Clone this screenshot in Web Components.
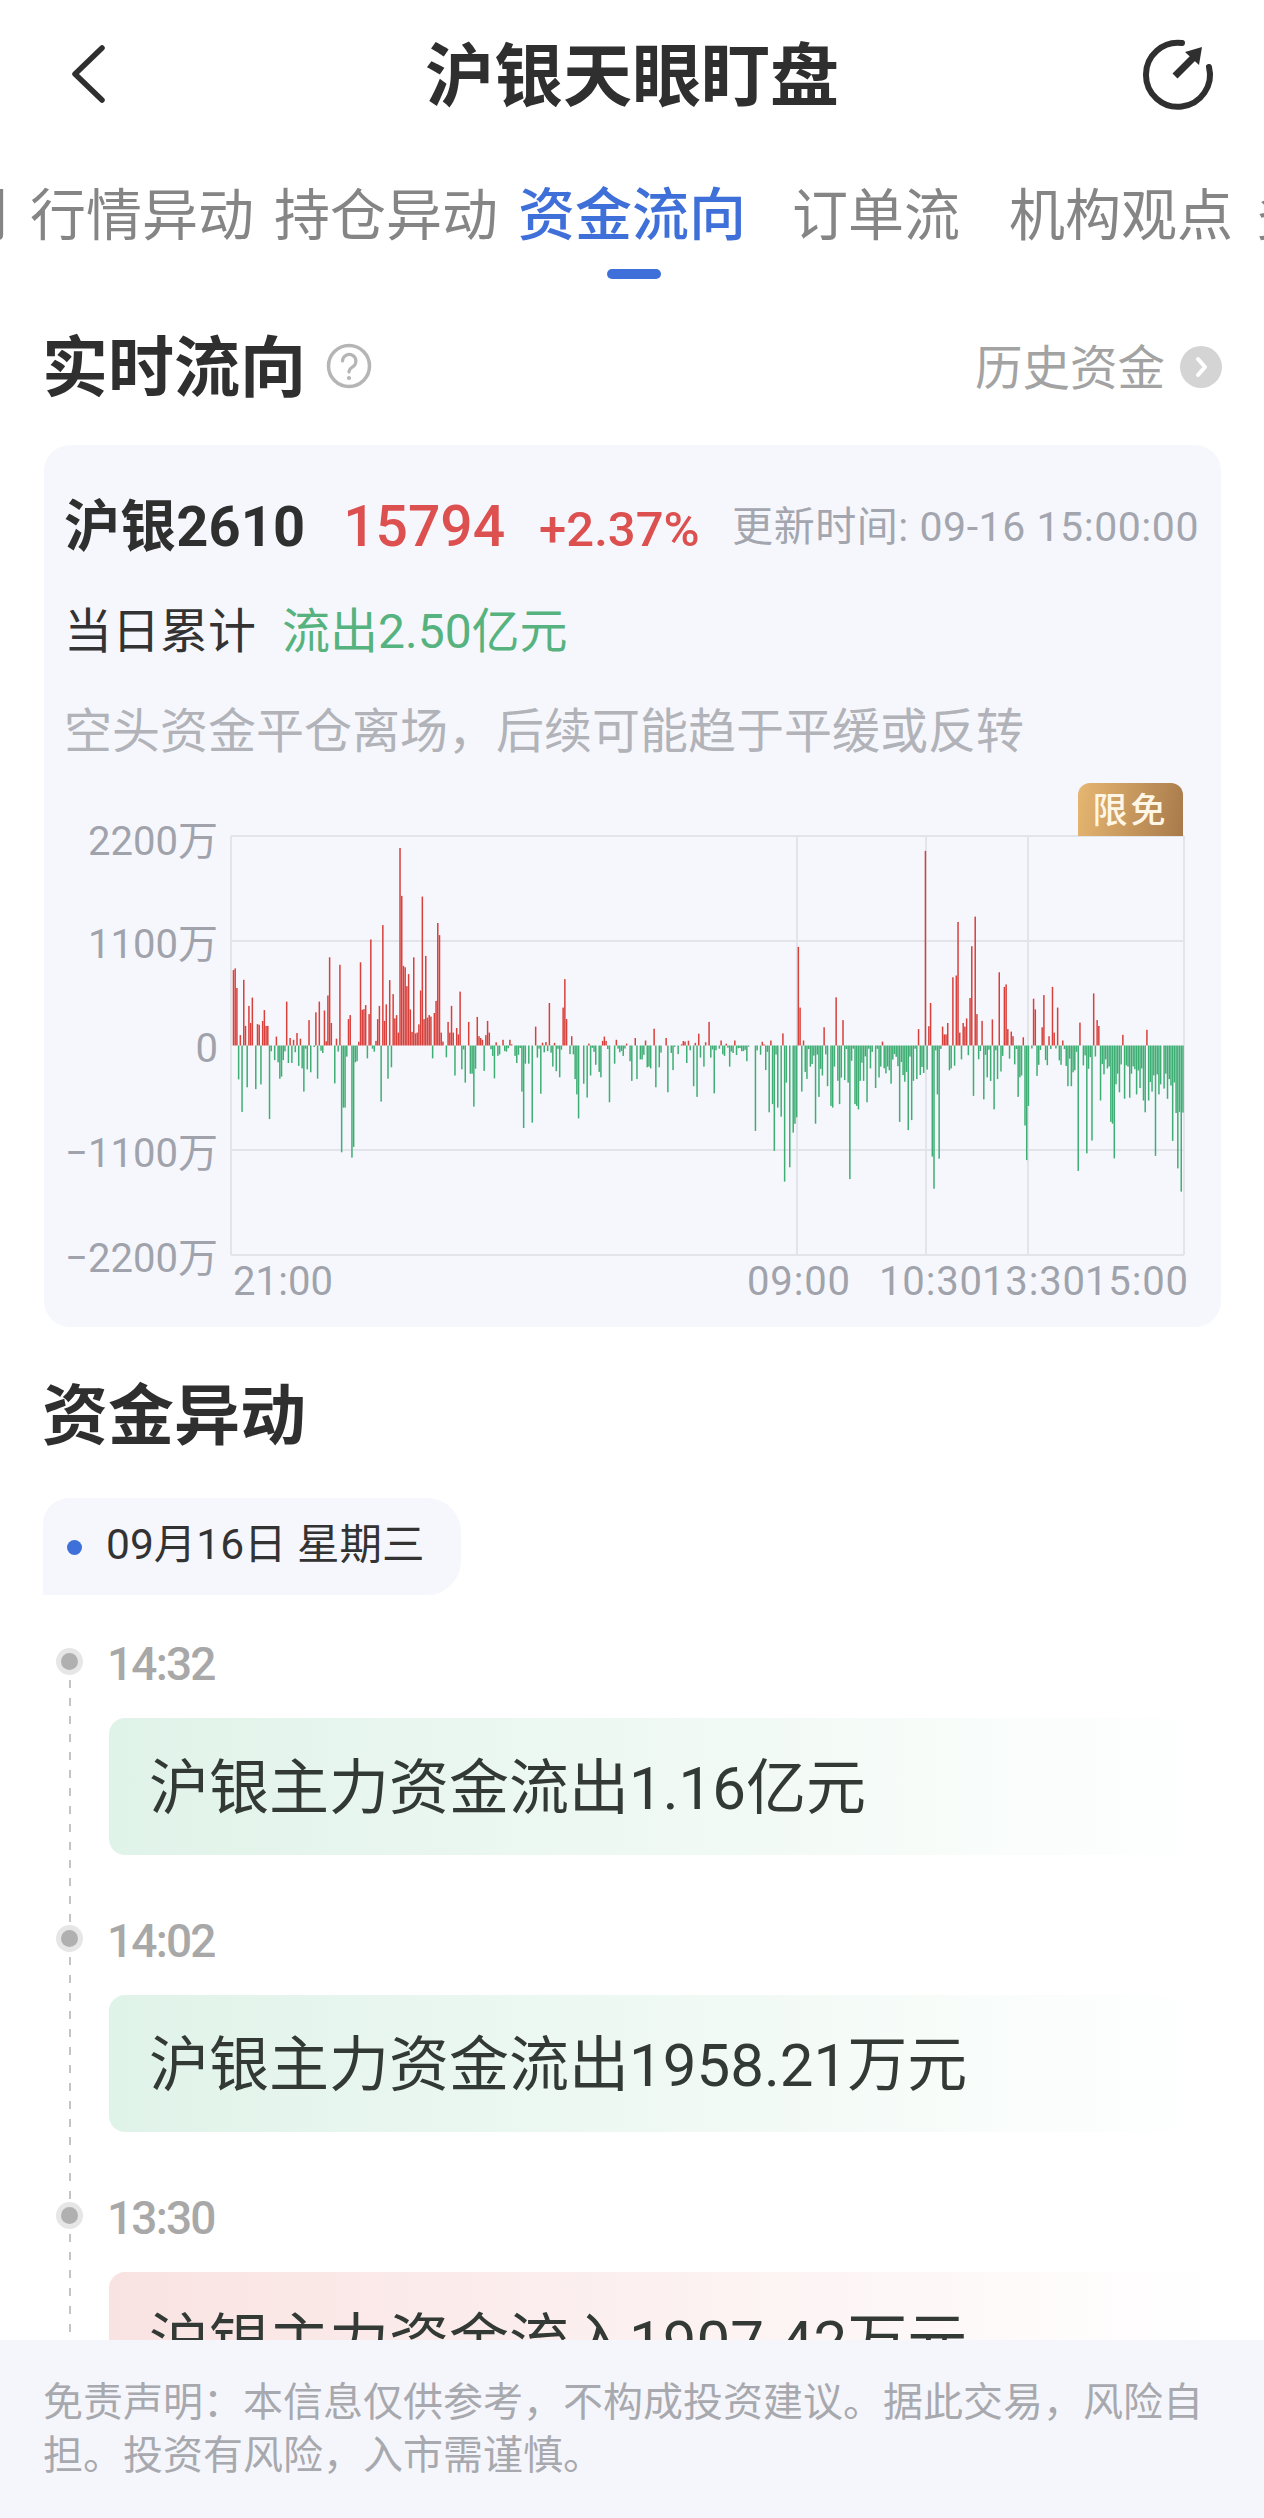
<!DOCTYPE html>
<html lang="zh-CN">
<head>
<meta charset="utf-8">
<title>沪银天眼盯盘</title>
<style>
  html, body { margin: 0; background: #fff; }
  body {
    width: 1264px; height: 2518px; overflow: hidden; position: relative;
    font-family: Roboto, "Noto Sans CJK SC", "Noto Sans", sans-serif; color: #333;
  }
</style>
</head>
<body>
<silver-header>沪银天眼盯盘</silver-header>
<silver-tabs>
  <silver-tab style="margin-left:-104px">研判</silver-tab>
  <silver-tab style="margin-left:22px">行情异动</silver-tab>
  <silver-tab style="margin-left:20px">持仓异动</silver-tab>
  <silver-tab active style="margin-left:20px">资金流向</silver-tab>
  <silver-tab style="margin-left:46px">订单流</silver-tab>
  <silver-tab style="margin-left:49px">机构观点</silver-tab>
  <silver-tab style="margin-left:22px">多空</silver-tab>
</silver-tabs>
<section-head help link="历史资金">实时流向</section-head>
<flow-card></flow-card>
<section-head class="second">资金异动</section-head>
<date-pill>09月16日 星期三</date-pill>
<event-timeline>
  <event-item time="14:32" tone="out">沪银主力资金流出1.16亿元</event-item>
  <event-item time="14:02" tone="out">沪银主力资金流出1958.21万元</event-item>
  <event-item time="13:30" tone="in">沪银主力资金流入1907.42万元</event-item>
</event-timeline>
<risk-note>免责声明：本信息仅供参考，不构成投资建议。据此交易，风险自担。投资有风险，入市需谨慎。</risk-note>

<script>
const define = (name, css, html) => {
  customElements.define(name, class extends HTMLElement {
    constructor() {
      super();
      this.attachShadow({ mode: 'open' }).innerHTML =
        `<style>${css}</style>${typeof html === 'function' ? html(this) : html}`;
    }
  });
};

define('silver-header', `
  :host { display:flex; align-items:center; justify-content:center; box-sizing:border-box; height:150px; padding-top:5px; position:relative; }
  h1 { margin:0; font-size:69px; font-weight:700; line-height:80px; color:#2f2f2f; }
  svg { position:absolute; }
  .back { left:66px; top:41px; }
  .refresh { left:1138px; top:35px; }
`, `
  <svg class="back" width="46" height="66" viewBox="0 0 46 66" fill="none" stroke="#2f2f2f" stroke-width="5.5" stroke-linecap="round" stroke-linejoin="round"><path d="M36 7 L9 33 L36 59"/></svg>
  <h1><slot></slot></h1>
  <svg class="refresh" width="80" height="80" viewBox="0 0 80 80" fill="none" stroke="#2f2f2f"><path d="M44 8 A32 32 0 1 0 71 32" stroke-width="6" stroke-linecap="round"/><path d="M37 41 L55 23" stroke-width="7"/><path d="M64 12 L47 17 L61 30 Z" fill="#2f2f2f" stroke="none"/></svg>
`);

define('silver-tabs', `
  :host { display:flex; overflow:hidden; padding-top:36px; height:93px; }
`, `<slot></slot>`);

define('silver-tab', `
  :host { display:flex; flex:none; flex-direction:column; align-items:center; font-size:56px; line-height:60px; color:#858585; }
  :host([active]) { color:#3f6fd8; font-weight:500; font-size:57px; }
  i { display:none; width:54px; height:10px; margin:23px 0 0 4px; border-radius:5px; background:#3f6fd8; }
  :host([active]) i { display:block; }
`, `<span><slot></slot></span><i></i>`);

define('section-head', `
  :host { display:flex; align-items:center; height:60px; margin-top:58px; padding:0 42px 0 42px; }
  h2 { margin:3px 0 0; font-size:66px; line-height:60px; font-weight:700; color:#2f2f2f; }
  .help { margin-left:20px; margin-top:-2px; }
  a { margin-left:auto; font-size:47.5px; color:#a3a3a3; display:flex; align-items:center; gap:15px; }
  a span { margin-top:-5px; }
`, el => `
  <h2><slot></slot></h2>
  ${el.hasAttribute('help') ? `<svg class="help" width="46" height="46" viewBox="0 0 46 46" fill="none" stroke="#b5b5b5"><circle cx="23" cy="23" r="20.5" stroke-width="3.5"/><path d="M16.5 18 A6.7 6.7 0 1 1 26.5 24 C24 25.5 23 26.5 23 29" stroke-width="3.2" stroke-linecap="round"/><circle cx="23" cy="35" r="2.1" fill="#b5b5b5" stroke="none"/></svg>` : ''}
  ${el.getAttribute('link') ? `<a><span>${el.getAttribute('link')}</span><svg width="42" height="42" viewBox="0 0 42 42"><circle cx="21" cy="21" r="21" fill="#d4d4d4"/><path d="M18 13 L25 21 L18 29" fill="none" stroke="#fff" stroke-width="4" stroke-linecap="round" stroke-linejoin="round"/></svg></a>` : ''}
`);

define('flow-card', `
  :host { display:block; box-sizing:border-box; width:1177px; height:882px; margin:48px 0 0 44px; border-radius:26px; background:#f6f7fc; padding-top:52px; }
  .row { display:flex; align-items:baseline; height:60px; line-height:60px; padding:0 22px 0 20px; }
  .r2 { margin-top:45px; font-size:48px; color:#333; }
  .r3 { margin-top:40px; font-size:48px; color:#b1b3b9; }
  .name { font-size:56px; font-weight:700; color:#2f2f2f; letter-spacing:.1px; }
  .price { margin-left:38px; font-size:57px; font-weight:500; color:#dc5050; }
  .pct { margin-left:34px; font-size:49px; font-weight:500; color:#dc5050; }
  .time { align-self:center; margin-left:auto; font-size:41px; color:#a3a6ae; letter-spacing:.55px; }
  .green { margin-left:26px; color:#56b37f; }
`, `
  <div class="row"><span class="name">沪银2610</span><span class="price">15794</span><span class="pct">+2.37%</span><span class="time">更新时间: 09-16 15:00:00</span></div>
  <div class="row r2"><span>当日累计</span><span class="green">流出2.50亿元</span></div>
  <div class="row r3"><span>空头资金平仓离场，后续可能趋于平缓或反转</span></div>
  <flow-chart></flow-chart>
`);

/* Net flow per minute. Each list holds the notable bars of one half of the session
   as [x, y] plot units; minuteBars() turns them into minute slots and pixel heights. */
const nightUp = [[488,560],[492,555],[497,610],[505,742],[514,587],[518,716],[527,660],[531,708],[536,637],[548,711],[553,713],[561,702],[566,672],[570,716],[574,716],[596,746],[622,648],[631,750],[640,755],[648,736],[657,752],[678,700],[696,678],[705,648],[718,673],[726,631],[730,524],[735,708],[748,752],[757,545],[778,697],[783,686],[809,538],[813,671],[818,669],[822,658],[831,683],[835,474],[853,697],[857,660],[865,434],[869,702],[874,656],[882,588],[891,627],[895,695],[899,686],[904,735],[908,218],[912,352],[917,548],[921,552],[926,605],[930,571],[935,670],[939,733],[943,524],[948,737],[952,735],[957,712],[961,617],[965,354],[970,697],[974,520],[978,693],[983,686],[987,690],[995,680],[999,646],[1004,428],[1008,462],[1013,735],[1017,760],[1030,705],[1034,735],[1038,660],[1043,735],[1051,722],[1056,740],[1060,620],[1082,705],[1104,691],[1108,745],[1113,750],[1117,755],[1126,742],[1130,702],[1134,735],[1147,693],[1170,755],[1180,700],[1186,755],[1250,718],[1285,652],[1320,665],[1325,585],[1331,697],[1340,745],[1345,745],[1375,675],[1393,728],[1428,746],[1458,755],[1497,757],[1502,750],[1528,757],[1550,722]];
const nightDown = [[501,866],[509,957],[523,888],[544,893],[557,880],[579,977],[592,812],[601,818],[605,864],[610,858],[614,812],[627,820],[636,820],[653,828],[662,835],[666,900],[675,838],[683,846],[700,864],[714,792],[744,877],[753,788],[761,1070],[766,945],[770,945],[774,802],[787,1085],[791,1055],[796,818],[800,815],[827,807],[840,780],[860,928],[878,864],[887,832],[992,807],[1025,804],[1047,855],[1065,838],[1073,875],[1087,850],[1091,850],[1095,942],[1100,836],[1121,842],[1143,800],[1150,863],[1156,800],[1177,788],[1200,800],[1205,820],[1216,900],[1220,1002],[1224,822],[1233,822],[1242,987],[1255,805],[1264,906],[1273,790],[1294,830],[1303,843],[1315,860],[1337,795],[1350,865],[1355,908],[1359,975],[1372,878],[1381,917],[1389,855],[1402,825],[1415,845],[1419,860],[1437,930],[1450,822],[1463,790],[1472,800],[1490,815],[1494,870],[1507,865],[1515,810],[1538,830],[1555,888]];
const dayUp = [[10,757],[32,724],[62,750],[110,760],[144,738],[160,765],[170,705],[234,757],[325,757],[355,737],[394,495],[398,665],[407,757],[458,745],[462,720],[488,722],[492,636],[506,700],[552,750],[608,760],[698,725],[716,226],[721,717],[726,652],[738,742],[758,718],[762,740],[767,740],[771,708],[785,580],[790,672],[794,575],[798,425],[802,735],[811,708],[815,718],[819,695],[828,638],[832,493],[841,410],[845,683],[858,702],[884,698],[901,566],[914,607],[918,600],[923,725],[931,732],[936,745],[962,748],[987,640],[992,670],[1009,720],[1012,630],[1026,745],[1035,607],[1039,735],[1047,665],[1060,757],[1104,707],[1138,625],[1147,700],[1151,716],[1211,741],[1272,727]];
const dayDown = [[3,810],[18,832],[27,835],[36,888],[45,832],[70,902],[83,840],[92,795],[114,820],[131,885],[140,915],[149,805],[157,830],[175,805],[183,905],[197,780],[210,800],[222,830],[232,792],[265,815],[290,1010],[312,840],[321,958],[329,935],[337,1066],[346,945],[351,970],[359,1152],[364,875],[372,1112],[381,1015],[386,990],[390,972],[403,900],[412,845],[425,830],[437,990],[449,915],[454,855],[467,885],[476,940],[480,945],[485,830],[497,860],[501,935],[510,868],[519,875],[527,1145],[536,935],[540,940],[545,950],[549,870],[558,870],[566,930],[575,835],[588,890],[601,830],[619,830],[630,878],[652,985],[665,845],[673,1008],[678,980],[695,865],[712,848],[730,1082],[734,1172],[743,908],[751,1088],[780,835],[806,810],[836,912],[862,922],[870,860],[879,870],[888,950],[896,865],[910,800],[927,808],[949,915],[958,855],[966,995],[970,1092],[975,940],[1000,825],[1018,812],[1053,825],[1072,885],[1080,885],[1100,1122],[1120,1073],[1133,1037],[1155,925],[1180,985],[1186,990],[1190,1087],[1198,850],[1216,920],[1225,830],[1233,850],[1255,890],[1263,925],[1267,958],[1276,925],[1285,900],[1294,1080],[1299,908],[1307,880],[1320,850],[1325,865],[1333,1032],[1337,1038],[1342,960],[1350,1115],[1355,1050],[1358,1180]];

const PLOT = { left:231, right:1184, top:836, zero:1045.5, bottom:1255, pitch:1.717, slots:555 };

function minuteBars() {
  const bars = new Array(PLOT.slots).fill(null);
  const place = (list, sx, ox) => list.forEach(([x, y]) => {
    const slot = Math.round((x / sx + ox - PLOT.left) / PLOT.pitch);
    if (slot >= 0 && slot < PLOT.slots) bars[slot] = (771 - y) / 2.8;
  });
  place(nightUp, 2.53, 40); place(nightDown, 2.53, 40);
  place(dayUp, 2.51, 640); place(dayDown, 2.51, 640);
  // Quiet minutes between the larger prints
  let seed = 7;
  const rand = () => (seed = (seed * 16807) % 2147483647) / 2147483647;
  for (let i = 0; i < PLOT.slots; i++) {
    if (bars[i] !== null) continue;
    const r = rand(), q = rand();
    if (i < 330) bars[i] = r < 0.42 ? 0 : r < 0.84 ? -(1 + q * 9) : 1 + q * 4;
    else if (i < 490) bars[i] = r < 0.12 ? 0 : -(3 + q * q * 34);
    else bars[i] = r < 0.06 ? 0 : -(5 + (i - 490) * 0.45 + q * q * 36);
  }
  return bars;
}

define('flow-chart', `
  :host { display:block; position:relative; width:1177px; height:567px; margin-top:-2px; }
  svg { display:block; font-family:Roboto, "Noto Sans CJK SC", "Noto Sans", sans-serif; }
  text { font-size:40px; fill:#a0a3ab; }
  .badge { position:absolute; left:1034px; top:23px; width:105px; height:53px; box-sizing:border-box; border-radius:12px 12px 0 0; background:linear-gradient(100deg,#e6b771,#a87a4b); color:#fff6e6; font-size:35px; line-height:57px; text-align:center; letter-spacing:3px; font-weight:500; }
`, () => {
  const { left, right, top, zero, bottom, pitch } = PLOT;
  const grid = [836, 941, 1150, 1255].map(y => `<line x1="${left}" x2="${right}" y1="${y}" y2="${y}"/>`).join('')
    + [231, 797, 926, 1028, 1184].map(x => `<line y1="${top}" y2="${bottom}" x1="${x}" x2="${x}"/>`).join('');
  const rects = minuteBars().map((v, i) => {
    if (!v) return '';
    const x = (left + i * pitch).toFixed(2), h = Math.abs(v).toFixed(1);
    return `<rect x="${x}" y="${v > 0 ? (zero - v).toFixed(1) : zero}" width="1.5" height="${h}" fill="${v > 0 ? '#d8403c' : '#3fae74'}"/>`;
  }).join('');
  const yLabels = [['2200万',855],['1100万',958],['0',1062],['−1100万',1167],['−2200万',1272]]
    .map(([t, y]) => `<text x="218" y="${y}" text-anchor="end">${t}</text>`).join('');
  const xLabels = [['21:00',233],['09:00',747],['10:30',879],['13:30',982],['15:00',1085]]
    .map(([t, x]) => `<text x="${x}" y="1295" textLength="${x === 233 ? 100 : 103}">${t}</text>`).join('');
  return `<svg width="1177" height="567" viewBox="44 760 1177 567">
    <g stroke="#e3e4ea" stroke-width="2">${grid}</g>${rects}${yLabels}${xLabels}
  </svg><div class="badge">限免</div>`;
});

define('date-pill', `
  :host { display:flex; align-items:center; box-sizing:border-box; width:418px; height:97px; margin:53px 0 0 43px; padding:0 0 12px 24px; border-radius:26px 34px 34px 0; background:#f6f7fc; font-size:42.5px; color:#333; }
  i { width:15px; height:15px; border-radius:50%; background:#3f6fd8; margin:14px 24px 0 0; flex:none; }
`, `<i></i><span><slot></slot></span>`);

define('event-timeline', `
  :host { display:block; margin-top:53px; padding-left:56px; }
`, `<slot></slot>`);

define('event-item', `
  :host { display:flow-root; position:relative; height:277px; padding-left:53px; }
  .rail { position:absolute; left:13px; top:14px; height:277px; width:2px; background:repeating-linear-gradient(#c4c4c4 0 8px, transparent 8px 18px); }
  .node { position:absolute; left:0; top:0; width:27px; height:27px; border-radius:50%; background:#e6e6e6; display:flex; align-items:center; justify-content:center; }
  .node::after { content:""; width:17px; height:17px; border-radius:50%; background:#b0b0b0; }
  .time { margin:2px 0 0 -2px; font-size:46px; line-height:28px; font-weight:500; color:#a8a8a8; letter-spacing:-1.8px; }
  .box { display:flex; align-items:center; box-sizing:border-box; height:137px; margin-top:40px; padding:0 0 8px 40px; border-radius:16px 0 0 16px; font-size:60px; color:#333a36; }
  :host([tone=out]) .box { background:linear-gradient(90deg,#e0f3e9,#fff 96%); }
  :host([tone=in]) .box { background:linear-gradient(90deg,#f9e3e2,#fff 96%); }
`, el => `
  <div class="rail"></div><div class="node"></div>
  <div class="time">${el.getAttribute('time')}</div>
  <div class="box"><span><slot></slot></span></div>
`);

define('risk-note', `
  :host { display:block; position:absolute; left:0; right:0; top:2340px; height:178px; box-sizing:border-box; padding:36px 44px 0 43px; background:#f5f6fb; font-size:40px; line-height:53px; color:#a8a9ae; }
`, `<slot></slot>`);
</script>
</body>
</html>
